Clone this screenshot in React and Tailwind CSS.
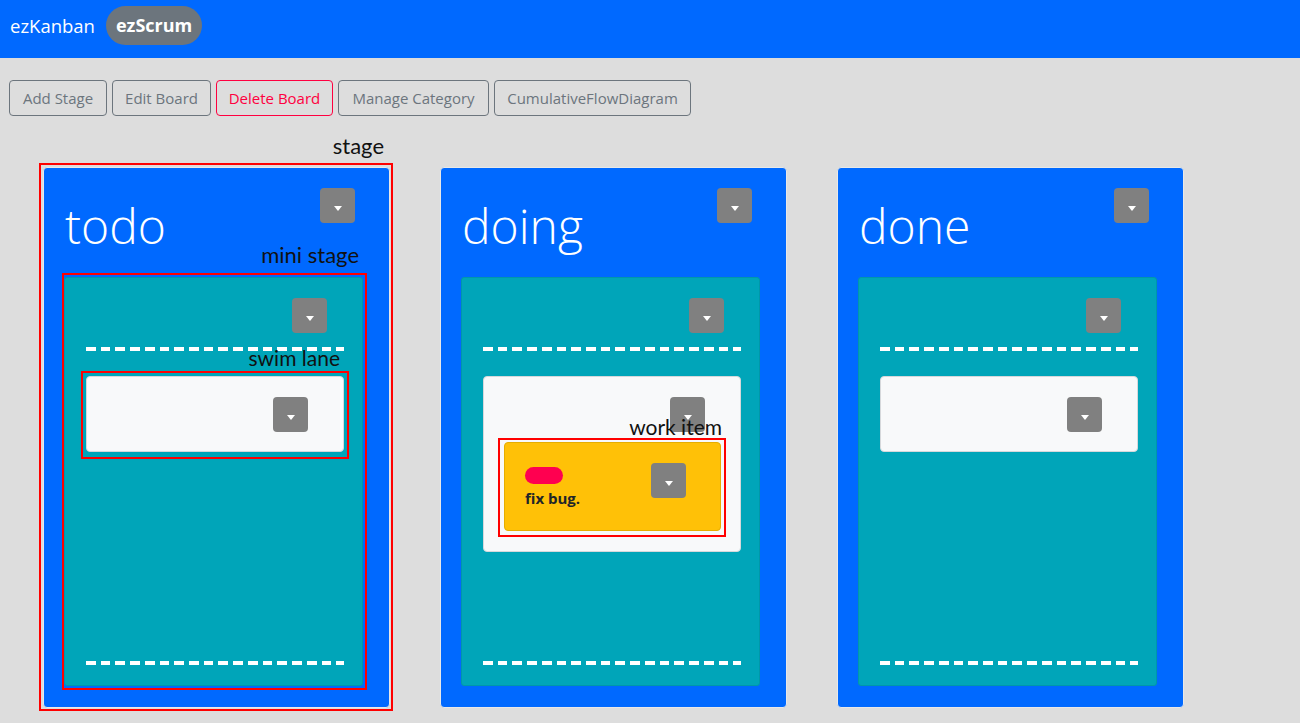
import React from "react";

const BLUE = "bg-[#0069ff]";

function Caret() {
  return (
    <span className="block w-0 h-0 border-t-[5px] border-t-white border-x-[4.5px] border-x-transparent" />
  );
}

function DropBtn({ className = "" }) {
  return (
    <div
      className={
        "w-[35px] h-[35px] shrink-0 rounded-[4px] bg-[#808080] flex items-center justify-center pt-[6px] " +
        className
      }
    >
      <Caret />
    </div>
  );
}

function Dashed({ className = "" }) {
  return (
    <div
      className={
        "h-[4px] bg-[repeating-linear-gradient(90deg,#ffffff_0px,#ffffff_9.7px,transparent_9.7px,transparent_14.72px)] " +
        className
      }
    />
  );
}

function Label({ children, className = "" }) {
  return (
    <span
      className={
        "absolute whitespace-nowrap leading-none text-[#111] font-['Lato','Noto_Sans',sans-serif] " +
        className
      }
    >
      {children}
    </span>
  );
}

function RedBox({ className = "" }) {
  return <div className={"absolute border-2 border-[#ff0000] pointer-events-none " + className} />;
}

function WorkItem({ annotate }) {
  return (
    <div className="relative mt-[10px] ml-[20px] mr-[19px]">
      {annotate && (
        <>
          <RedBox className="-left-[6px] -top-[4px] -right-[5px] -bottom-[6px]" />
          <Label className="text-[21px] right-[-1px] top-[-26px]">work item</Label>
        </>
      )}
      <div className="h-[89px] rounded-[4px] bg-[#ffc107] border border-[#e6ad00] flex justify-between">
        <div className="pl-[20px] pt-[24px] flex flex-col">
          <div className="w-[38px] h-[17px] rounded-full bg-[#ff0050]" />
          <div className="mt-[5px] text-[15px] leading-[18px] font-bold text-[#212529] font-['Open_Sans',sans-serif]">
            fix bug.
          </div>
        </div>
        <DropBtn className="mt-[20px] mr-[34px]" />
      </div>
    </div>
  );
}

function SwimLane({ annotate, withItem }) {
  return (
    <div className="relative mt-[25px] ml-[21px] mr-[18px]">
      {annotate && (
        <>
          <RedBox className="-left-[5px] -top-[5px] -right-[5px] -bottom-[7px]" />
          <Label className="text-[21px] right-[4px] top-[-29px]">swim lane</Label>
        </>
      )}
      <div className="rounded-[4px] bg-[#f8f9fa] border border-[#d6d8db] pt-[20px] pb-[19px] flex flex-col">
        <div className="flex justify-end pr-[35px]">
          <DropBtn />
        </div>
        {withItem && <WorkItem annotate />}
        {withItem && <div className="h-[1px]" />}
      </div>
    </div>
  );
}

function MiniStage({ annotate, withItem }) {
  return (
    <div className="relative ml-[20px] mr-[26px]">
      {annotate && (
        <>
          <RedBox className="-left-[2px] -top-[4px] -right-[4px] -bottom-[4px]" />
          <Label className="text-[22px] right-[4px] top-[-33px]">mini stage</Label>
        </>
      )}
      <div className="h-[409px] rounded-[3px] bg-[#00a5b9] border border-[#0097aa] flex flex-col pt-[20px]">
        <div className="flex justify-end pr-[35px]">
          <DropBtn />
        </div>
        <Dashed className="mt-[14px] ml-[21px] mr-[18px]" />
        <SwimLane annotate={annotate} withItem={withItem} />
        <div className="flex-1" />
        <Dashed className="mb-[20px] ml-[21px] mr-[18px]" />
      </div>
    </div>
  );
}

function Stage({ title, annotate, withItem }) {
  return (
    <div className="relative w-[347px] shrink-0">
      {annotate && (
        <>
          <RedBox className="-left-[4px] -top-[4px] -right-[3px] -bottom-[3px]" />
          <Label className="text-[22px] right-[6px] top-[-32px]">stage</Label>
        </>
      )}
      <div className={"h-[541px] rounded-[4px] border border-[#e8e8e8] " + BLUE + " pt-[20px] flex flex-col"}>
        <div className="flex justify-between items-start h-[89px]">
          <div className="ml-[21px] mt-[14px] text-[48px] leading-[48px] font-light text-white font-['Open_Sans',sans-serif]">
            {title}
          </div>
          <DropBtn className="mr-[34px]" />
        </div>
        <MiniStage annotate={annotate} withItem={withItem} />
      </div>
    </div>
  );
}

function OutlineBtn({ children, className = "", red }) {
  return (
    <button
      className={
        "h-[36px] rounded-[4px] border text-[15px] flex items-center justify-center font-['Open_Sans',sans-serif] " +
        (red ? "border-[#ff0040] text-[#ff0040] " : "border-[#6c757d] text-[#6c757d] ") +
        className
      }
    >
      {children}
    </button>
  );
}

export default function App() {
  return (
    <div className="min-h-screen w-full bg-[#dddddd] overflow-hidden font-['Open_Sans',sans-serif]">
      <nav className={"h-[58px] " + BLUE + " flex items-start pt-[6px] pl-[10px]"}>
        <div className="flex items-center h-[39px]">
          <span className="text-white text-[18.5px]">ezKanban</span>
          <span className="ml-[11px] h-[39px] px-[10px] rounded-full bg-[#6c757d] text-white text-[18px] font-bold flex items-center">
            ezScrum
          </span>
        </div>
      </nav>

      <div className="flex gap-[5px] pl-[9px] mt-[22px]">
        <OutlineBtn className="w-[98px]">Add Stage</OutlineBtn>
        <OutlineBtn className="w-[99px]">Edit Board</OutlineBtn>
        <OutlineBtn className="w-[117px]" red>
          Delete Board
        </OutlineBtn>
        <OutlineBtn className="w-[151px]">Manage Category</OutlineBtn>
        <OutlineBtn className="w-[197px]">CumulativeFlowDiagram</OutlineBtn>
      </div>

      <div className="flex gap-[50px] pl-[43px] mt-[51px]">
        <Stage title="todo" annotate />
        <Stage title="doing" withItem />
        <Stage title="done" />
      </div>
    </div>
  );
}
